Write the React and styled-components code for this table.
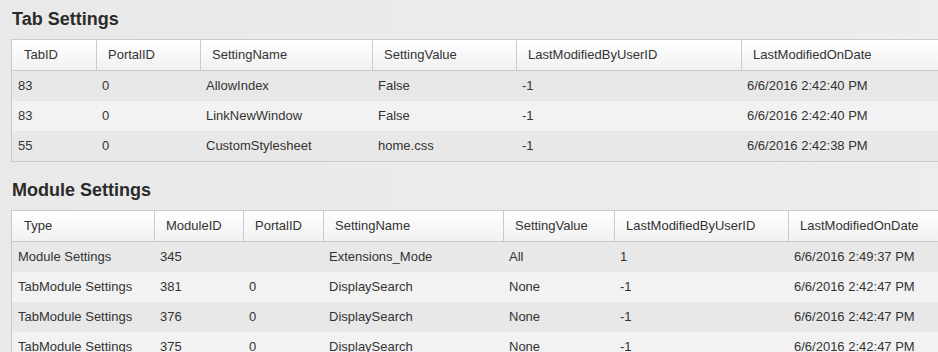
import React from 'react';
import styled, { createGlobalStyle } from 'styled-components';

const GlobalStyle = createGlobalStyle`
  html, body {
    margin: 0;
    padding: 0;
    overflow: hidden;
    background: #ebebeb;
  }
  * {
    box-sizing: border-box;
  }
`;

const tabColumns = '84px 104px 172px 144px 225px 1fr';
const moduleColumns = '142px 89px 80px 180px 111px 174px 1fr';

const tabHeaders = [
  'TabID',
  'PortalID',
  'SettingName',
  'SettingValue',
  'LastModifiedByUserID',
  'LastModifiedOnDate',
];

const tabRows = [
  ['83', '0', 'AllowIndex', 'False', '-1', '6/6/2016 2:42:40 PM'],
  ['83', '0', 'LinkNewWindow', 'False', '-1', '6/6/2016 2:42:40 PM'],
  ['55', '0', 'CustomStylesheet', 'home.css', '-1', '6/6/2016 2:42:38 PM'],
];

const moduleHeaders = [
  'Type',
  'ModuleID',
  'PortalID',
  'SettingName',
  'SettingValue',
  'LastModifiedByUserID',
  'LastModifiedOnDate',
];

const moduleRows = [
  ['Module Settings', '345', '', 'Extensions_Mode', 'All', '1', '6/6/2016 2:49:37 PM'],
  ['TabModule Settings', '381', '0', 'DisplaySearch', 'None', '-1', '6/6/2016 2:42:47 PM'],
  ['TabModule Settings', '376', '0', 'DisplaySearch', 'None', '-1', '6/6/2016 2:42:47 PM'],
  ['TabModule Settings', '375', '0', 'DisplaySearch', 'None', '-1', '6/6/2016 2:42:47 PM'],
];

function SettingsTable({ title, columns, headers, rows, first }) {
  return (
    <Section $first={first}>
      <Title>{title}</Title>
      <Table>
        <HeadRow $cols={columns}>
          {headers.map((h) => (
            <HeadCell key={h}>{h}</HeadCell>
          ))}
        </HeadRow>
        {rows.map((row, i) => (
          <BodyRow key={i} $cols={columns} $alt={i % 2 === 1}>
            {row.map((cell, j) => (
              <Cell key={j}>{cell}</Cell>
            ))}
          </BodyRow>
        ))}
      </Table>
    </Section>
  );
}

export default function App() {
  return (
    <Page>
      <GlobalStyle />
      <SettingsTable
        first
        title="Tab Settings"
        columns={tabColumns}
        headers={tabHeaders}
        rows={tabRows}
      />
      <SettingsTable
        title="Module Settings"
        columns={moduleColumns}
        headers={moduleHeaders}
        rows={moduleRows}
      />
    </Page>
  );
}

const Page = styled.div`
  width: 938px;
  height: 352px;
  overflow: hidden;
  padding: 8px 0 0 11px;
  background: linear-gradient(to right, #e9e9e9, #ededed);
  font-family: 'Liberation Sans', Arial, sans-serif;
  color: #333;
`;

const Section = styled.div`
  margin-top: ${(p) => (p.$first ? '0' : '17px')};
`;

const Title = styled.h2`
  margin: 0 0 9px 1px;
  font-size: 18px;
  line-height: 22px;
  font-weight: bold;
  color: #2b2b2b;
`;

const Table = styled.div`
  width: 1000px;
  border-top: 1px solid #cbcbcb;
  border-bottom: 1px solid #cbcbcb;
  border-left: 1px solid #cbcbcb;
  font-size: 13px;
`;

const HeadRow = styled.div`
  display: grid;
  grid-template-columns: ${(p) => p.$cols};
  height: 31px;
  border-bottom: 1px solid #cbcbcb;
  background: linear-gradient(to bottom, #ffffff, #f1f1f1);
`;

const HeadCell = styled.div`
  padding-left: 12px;
  line-height: 30px;
  white-space: nowrap;

  & + & {
    border-left: 1px solid #cbcbcb;
    padding-left: 11px;
  }
`;

const BodyRow = styled.div`
  display: grid;
  grid-template-columns: ${(p) => p.$cols};
  height: 30px;
  background: ${(p) => (p.$alt ? '#f2f2f2' : '#e8e8e8')};
`;

const Cell = styled.div`
  padding-left: 6px;
  line-height: 30px;
  white-space: nowrap;
`;
